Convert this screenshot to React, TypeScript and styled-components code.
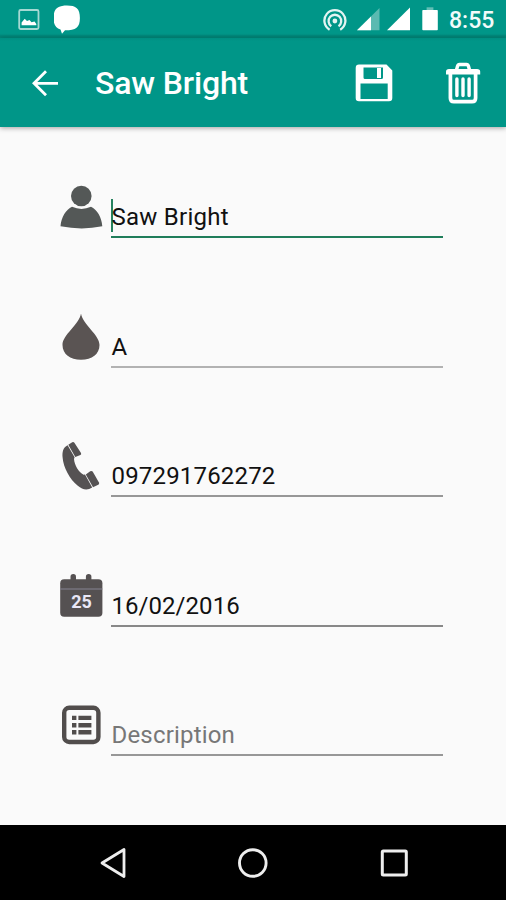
import React from "react";
import styled, { createGlobalStyle } from "styled-components";

const GlobalStyle = createGlobalStyle`
  * { box-sizing: border-box; }
  html, body { margin: 0; padding: 0; }
  body { background: #fafafa; font-family: Roboto, "Noto Sans", sans-serif; }
`;

const Screen = styled.div`
  width: 506px;
  height: 900px;
  display: flex;
  flex-direction: column;
  overflow: hidden;
  background: #fafafa;
`;

const StatusBar = styled.header`
  height: 38px;
  flex: none;
  display: flex;
  align-items: center;
  justify-content: space-between;
  padding: 0 12px 0 18px;
  background: linear-gradient(#009688 0 34px, #008578 36px, #00897c 38px);
`;

const StatusGroup = styled.div`
  display: flex;
  align-items: center;
  height: 38px;
`;

const StatusIcon = styled.svg<{ $gap: number }>`
  display: block;
  height: 38px;
  margin-right: ${(p) => p.$gap}px;
`;

const Clock = styled.span`
  width: 45px;
  font-size: 23px;
  font-weight: 500;
  line-height: 42px;
  height: 38px;
  color: #f2fbfa;
  white-space: nowrap;
`;

const AppBar = styled.div`
  height: 89px;
  flex: none;
  display: flex;
  align-items: center;
  padding: 0 25px 0 31px;
  background: linear-gradient(#008e81, #009688 3px);
  box-shadow: 0 1px 5px rgba(0, 0, 0, 0.36);
`;

const BarButton = styled.button`
  display: block;
  padding: 0;
  border: 0;
  background: none;
  color: #fff;
  svg { display: block; }
`;

const Title = styled.h1`
  flex: 1;
  margin: 0 0 0 36px;
  font-size: 32px;
  font-weight: 500;
  line-height: 40px;
  letter-spacing: -0.15px;
  color: #fff;
  white-space: nowrap;
`;

const Actions = styled.div`
  display: flex;
  align-items: center;
  gap: 52px;
`;

const Form = styled.main`
  flex: 1;
  display: flex;
  flex-direction: column;
  gap: 75.5px;
  padding: 57px 63px 0 59px;
`;

const Row = styled.div`
  height: 54px;
  flex: none;
  display: flex;
  align-items: stretch;
  gap: 8px;
`;

const FieldIcon = styled.svg`
  display: block;
  width: 44px;
  height: 54px;
  flex: none;
  overflow: visible;
`;

const Field = styled.div<{ $active?: boolean; $hint?: boolean; $line?: string }>`
  flex: 1;
  display: flex;
  align-items: flex-end;
  padding-bottom: 3px;
  border-bottom: 2px solid ${(p) => (p.$active ? "#1f7d5a" : p.$line ?? "#a3a3a3")};
  color: ${(p) => (p.$hint ? "#777" : "#111")};
  font-size: 24px;
  line-height: 32px;
  white-space: nowrap;
`;

const Caret = styled.span`
  width: 2px;
  height: 33px;
  margin: 0 -2px 1px 0;
  background: #26825f;
`;

const Value = styled.span<{ $spacing?: number }>`
  padding-left: 0.5px;
  letter-spacing: ${(p) => p.$spacing ?? 0.18}px;
`;

const NavBar = styled.nav`
  height: 75px;
  flex: none;
  display: flex;
  align-items: center;
  justify-content: space-between;
  padding: 1px 97px 0 97px;
  background: #000;
`;

const PersonIcon = () => (
  <FieldIcon viewBox="0 0 44 54" fill="#545857">
    <circle cx="22.3" cy="12" r="10.3" />
    <path d="M1.5 42.3C2.3 33 7 25.5 13 22.8Q22.5 27 32 22.8C38 25.5 42.7 33 43.3 42.3Q23 46.6 1.5 42.3Z" />
  </FieldIcon>
);

const DropIcon = () => (
  <FieldIcon viewBox="0 0 44 54" fill="#5a5453">
    <path d="M22 -.5C20.5 10.5 3.5 20.5 3.5 31C3.5 40 11 45.8 22 45.8S40.5 40 40.5 31C40.5 20.5 23.5 10.5 22 -.5Z" />
  </FieldIcon>
);

const PhoneIcon = () => (
  <FieldIcon viewBox="0 0 44 54" fill="#555253">
    <path d="M8.6 2.2L15.6 14.2L15 16C15.6 22.5 19.5 29 24.6 31.8L26 31.6L33.2 44.6C28 47.8 23.4 46.6 18.8 42.8C10.5 36 4.4 24.5 3.6 14.5C3 8.5 4.2 4.6 8.6 2.2Z" />
    <path d="M9.3 1.7L13.2 -.8Q14.7 -1.3 15.4 -.2L22 10Q22.6 11.3 21.4 12L16.3 14Z" />
    <path d="M26.8 31.5L31.2 28.2Q32.8 27.5 33.8 28.7L40.1 39.7Q40.5 41 39.2 41.7L34 44.3Z" />
  </FieldIcon>
);

const CalendarIcon = () => (
  <FieldIcon viewBox="0 0 44 54" fill="#555152">
    <rect x="11.5" y="1" width="5.5" height="9" rx="2.7" />
    <rect x="26.9" y="1" width="5.5" height="9" rx="2.7" />
    <rect x="1.2" y="6.3" width="42.2" height="37.5" rx="4" />
    <path d="M1.2 16H43.4" stroke="#858391" strokeWidth="1.2" />
    <text x="22.5" y="35.3" textAnchor="middle" fontFamily="Roboto, sans-serif" fontSize="18" fontWeight="700" fill="#e9e7f6">25</text>
  </FieldIcon>
);

const ListIcon = () => (
  <FieldIcon viewBox="0 0 44 54" fill="#514d4c">
    <rect x="5.2" y="5.8" width="34.2" height="34.2" rx="5" fill="none" stroke="#514d4c" strokeWidth="4.4" />
    <path d="M13 13.8h4.4v4.2H13zM19.4 13.8h13v4.2h-13zM13 21h4.4v4.4H13zM19.4 21h13v4.4h-13zM13 28.1h4.4v4.3H13zM19.4 28.1h13v4.3h-13z" />
  </FieldIcon>
);

export default function App() {
  return (
    <>
      <GlobalStyle />
      <Screen>
        <StatusBar>
          <StatusGroup>
            <StatusIcon $gap={14} width="22" viewBox="0 0 22 38">
              <rect x="1.2" y="10" width="19.3" height="19" rx="1.5" fill="none" stroke="#a5d9d3" strokeWidth="1.8" />
              <path d="M3.6 25.3V22.5L6.7 18.8L9 21L11.5 20L13.5 22.2L16.5 21.5L18.3 24V25.3Z" fill="#fff" />
            </StatusIcon>
            <StatusIcon $gap={0} width="28" viewBox="0 0 28 38">
              <path d="M13 5.5C22 5.5 25.9 8.5 25.9 18C25.9 27.5 22 30.3 11 30.3L8 33.8L6.5 29.5C1.5 28 -.5 24.5 -.5 18C-.5 8.5 4 5.5 13 5.5Z" fill="#fff" />
            </StatusIcon>
          </StatusGroup>
          <StatusGroup>
            <StatusIcon $gap={10} width="24" viewBox="0 0 24 38" fill="none" stroke="#e3f4f2" strokeWidth="2.3">
              <path d="M6.6 29.7A10.5 10.5 0 1 1 17.2 29.7" />
              <path d="M8.3 26.2A6.3 6.3 0 1 1 15.5 26.2" />
              <circle cx="11.9" cy="21" r="2.4" fill="#e3f4f2" stroke="none" />
            </StatusIcon>
            <StatusIcon $gap={7} width="23" viewBox="0 0 23 38">
              <path d="M0 30.3L22.5 8V30.3Z" fill="#5bbab1" />
              <path d="M0 30.3L14 16.4V30.3Z" fill="#fff" />
            </StatusIcon>
            <StatusIcon $gap={12} width="23" viewBox="0 0 23 38">
              <path d="M0 30.3L23 7.5V30.3Z" fill="#fff" />
            </StatusIcon>
            <StatusIcon $gap={11} width="16" viewBox="0 0 16 38">
              <rect x="4.6" y="7.3" width="6.8" height="3" fill="#63beb5" />
              <rect x="0.3" y="10" width="15.5" height="20.3" rx=".8" fill="#fff" />
            </StatusIcon>
            <Clock>8:55</Clock>
          </StatusGroup>
        </StatusBar>

        <AppBar>
          <BarButton aria-label="Back">
            <svg width="28" height="28" viewBox="0 0 28 28" fill="none" stroke="currentColor" strokeWidth="2.8">
              <path d="M27 14.3H3M15 2.3L3 14.3L15 26.3" />
            </svg>
          </BarButton>
          <Title>Saw Bright</Title>
          <Actions>
            <BarButton aria-label="Save">
              <svg width="38" height="40" viewBox="0 0 38 40" fill="currentColor">
                <path fillRule="evenodd" d="M4 1.6H31.5L37.3 7.5V35Q37.3 38.2 34 38.2H4Q.7 38.2 .7 35V5Q.7 1.6 4 1.6ZM8.5 4.5V14.5Q8.5 16 10 16H26.5Q28 16 28 14.5V4.5ZM5.500 20.5V36H32.7V20.5Z" />
                <rect x="22" y="5" width="4" height="10" />
              </svg>
            </BarButton>
            <BarButton aria-label="Delete">
              <svg width="36" height="42" viewBox="0 0 36 42" fill="none" stroke="currentColor">
                <path d="M11.5 8L12.5 4.2Q13 2.5 14.5 2.5H21.5Q23 2.5 23.5 4.2L24.5 8" strokeWidth="3.4" />
                <path d="M1 12.5V9.5Q1 7 4 7H32Q35.2 7 35.2 9.5V12.5Z" fill="currentColor" stroke="none" />
                <path d="M5.4 10V36Q5.4 39.7 8.9 39.7H27.1Q30.6 39.7 30.6 36V10" strokeWidth="3.7" />
                <path d="M11.9 17V33.5M18 17V33.5M24.1 17V33.5" strokeWidth="3.4" strokeLinecap="round" />
              </svg>
            </BarButton>
          </Actions>
        </AppBar>

        <Form>
          <Row>
            <PersonIcon />
            <Field $active>
              <Caret />
              <Value $spacing={0.25}>Saw Bright</Value>
            </Field>
          </Row>
          <Row>
            <DropIcon />
            <Field $line="#b2b2b2"><Value>A</Value></Field>
          </Row>
          <Row>
            <PhoneIcon />
            <Field $line="#979797"><Value>097291762272</Value></Field>
          </Row>
          <Row>
            <CalendarIcon />
            <Field $line="#888"><Value $spacing={0.05}>16/02/2016</Value></Field>
          </Row>
          <Row>
            <ListIcon />
            <Field $hint $line="#979797"><Value>Description</Value></Field>
          </Row>
        </Form>

        <NavBar>
          <BarButton aria-label="Navigate back">
            <svg width="30" height="32" viewBox="0 0 30 32" fill="none" stroke="#eee" strokeWidth="2.8" strokeLinejoin="round">
              <path d="M27 2.5V29.5L5 16Z" />
            </svg>
          </BarButton>
          <BarButton aria-label="Home">
            <svg width="32" height="32" viewBox="0 0 32 32" fill="none" stroke="#eee" strokeWidth="2.9">
              <circle cx="15.8" cy="16" r="13.3" />
            </svg>
          </BarButton>
          <BarButton aria-label="Recent apps">
            <svg width="30" height="30" viewBox="0 0 30 30" fill="none" stroke="#eee" strokeWidth="3">
              <rect x="3.3" y="3" width="24" height="24" rx="1" />
            </svg>
          </BarButton>
        </NavBar>
      </Screen>
    </>
  );
}
